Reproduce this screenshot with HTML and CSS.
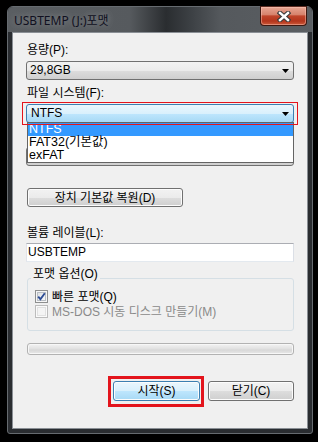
FILE: index.html
```html
<!DOCTYPE html>
<html lang="ko">
<head>
<meta charset="utf-8">
<title>USBTEMP (J:)포맷</title>
<link rel="stylesheet" href="styles.css">
</head>
<body>
<div class="window">
  <div class="titlebar">
    <span class="title">USBTEMP (J:)포맷</span>
    <div class="close-btn">
      <svg width="14" height="11" viewBox="0 0 14 11">
        <path d="M3 2 L11 9 M11 2 L3 9" stroke="#3b3b3b" stroke-width="4.6" stroke-linecap="square" fill="none"/>
        <path d="M3 2 L11 9 M11 2 L3 9" stroke="#ffffff" stroke-width="2.4" stroke-linecap="square" fill="none"/>
      </svg>
    </div>
  </div>
  <div class="frame-body">
    <div class="client">
      <span class="label">용량(P):</span>
      <div class="combo">
        <span>29,8GB</span>
        <svg class="arrow" width="7" height="4" viewBox="0 0 7 4"><path d="M0 0 H7 L3.5 4 Z" fill="#000"/></svg>
      </div>

      <span class="label gap">파일 시스템(F):</span>
      <div class="combo focused">
        <span>NTFS</span>
        <svg class="arrow" width="7" height="4" viewBox="0 0 7 4"><path d="M0 0 H7 L3.5 4 Z" fill="#000"/></svg>
        <span class="annot thin"></span>
        <ul class="dropdown">
          <li class="selected">NTFS</li>
          <li>FAT32(기본값)</li>
          <li>exFAT</li>
        </ul>
      </div>

      <span class="label gap"></span>
      <div class="combo">
        <svg class="arrow" width="7" height="4" viewBox="0 0 7 4"><path d="M0 0 H7 L3.5 4 Z" fill="#000"/></svg>
      </div>

      <button class="btn restore">장치 기본값 복원(D)</button>

      <span class="label label-volume">볼륨 레이블(L):</span>
      <div class="textbox">USBTEMP</div>

      <div class="group">
        <span class="group-label">포맷 옵션(O)</span>
        <div class="check-row first">
          <span class="cb checked">
            <svg width="9" height="9" viewBox="0 0 9 9"><path d="M1.2 4.6 L3.4 7.2 L7.8 1.2" stroke="#2d4c94" stroke-width="1.9" fill="none"/></svg>
          </span>
          <span>빠른 포맷(Q)</span>
        </div>
        <div class="check-row disabled">
          <span class="cb"></span>
          <span>MS-DOS 시동 디스크 만들기(M)</span>
        </div>
      </div>

      <div class="progress"></div>

      <div class="actions">
        <button class="btn start">시작(S)<span class="annot thick"></span></button>
        <button class="btn close">닫기(C)</button>
      </div>
    </div>
  </div>
</div>
</body>
</html>
```

FILE: styles.css
```css
* {
  box-sizing: border-box;
}

html,
body {
  margin: 0;
}

body {
  width: 318px;
  height: 442px;
  padding: 6px 0 0 7px;
  background: #000;
  font-family: "Liberation Sans", "Noto Sans CJK KR", sans-serif;
  font-size: 12px;
  color: #000;
}

.window {
  width: 306px;
  height: 428px;
  border: 1px solid #666b70;
  border-radius: 6px 6px 3px 3px;
  background: #2a2d31;
  display: flex;
  flex-direction: column;
}

.titlebar {
  height: 25px;
  flex: none;
  display: flex;
  align-items: center;
  border-radius: 5px 5px 0 0;
  background: linear-gradient(90deg, #5a5e62 0%, #565a5e 40%, #2a2d30 52%, #3c4044 60%, #55595d 70%, #5a5e62 100%);
}

.title {
  margin-left: 6px;
  font-family: "Noto Sans", "Noto Sans CJK KR", sans-serif;
  font-size: 12px;
  color: #101020;
  text-shadow: 0 0 7px rgba(255, 255, 255, 0.3), 0 0 12px rgba(255, 255, 255, 0.2);
}

.close-btn {
  margin-left: auto;
  margin-right: 5px;
  margin-top: -1px;
  align-self: flex-start;
  width: 47px;
  height: 20px;
  border: 1px solid #3e1810;
  border-top-color: #5a2a20;
  border-radius: 0 0 4px 4px;
  background: linear-gradient(#e8a693 0%, #d7836d 42%, #c0452b 50%, #b4351c 78%, #cc5a3a 100%);
  box-shadow: inset 0 0 0 1px rgba(255, 205, 190, 0.45);
  display: flex;
  align-items: center;
  justify-content: center;
}

.frame-body {
  flex: 1;
  display: flex;
  padding: 0 4px 4px;
}

.client {
  flex: 1;
  border: 1px solid #8a8f95;
  background: #f0f0f0;
  padding: 10px 13px 0;
}

.label {
  display: block;
  margin-left: 1px;
  height: 14px;
  line-height: 14px;
}

.label.gap {
  margin-top: 6px;
}

.combo {
  position: relative;
  height: 19px;
  margin-top: 4px;
  border: 1px solid #707070;
  border-radius: 3px;
  background: linear-gradient(#f2f2f2 0%, #ebebeb 50%, #dddddd 51%, #cfcfcf 100%);
  display: flex;
  align-items: center;
  padding-left: 3px;
  line-height: 15px;
}

.combo.focused {
  border-color: #3c7fb1;
  background: linear-gradient(#eaf6fd 0%, #d9f0fc 50%, #bee6fd 51%, #a7d9f5 100%);
  padding-left: 4px;
}

.arrow {
  margin-left: auto;
  margin-right: 4px;
}

.annot {
  position: absolute;
  z-index: 3;
  pointer-events: none;
}

.annot.thin {
  top: -3px;
  bottom: -3px;
  left: -5px;
  right: -5px;
  border: 1px solid #e3141c;
}

.annot.thick {
  top: -6px;
  bottom: -7px;
  left: -6px;
  right: -5px;
  border: 3px solid #e3141c;
}

.dropdown {
  position: absolute;
  z-index: 2;
  top: 100%;
  left: 0;
  right: -1px;
  margin: 0;
  padding: 0;
  list-style: none;
  background: #fff;
  border: 1px solid #646464;
}

.dropdown li {
  height: 13px;
  line-height: 13px;
  padding-left: 1px;
  font-size: 12.5px;
  white-space: nowrap;
}

.dropdown li.selected {
  background: #3399ff;
  color: #fff;
}

.btn {
  font: inherit;
  color: #000;
  padding: 0;
  border: 1px solid #707070;
  border-radius: 3px;
  background: linear-gradient(#f2f2f2 0%, #ebebeb 50%, #dddddd 51%, #cfcfcf 100%);
  box-shadow: inset 0 0 0 1px #fcfcfc;
  display: flex;
  align-items: center;
  justify-content: center;
  line-height: 14px;
}

.restore {
  margin: 22px 0 0 1px;
  width: 156px;
  height: 19px;
}

.label-volume {
  margin-top: 19px;
}

.textbox {
  margin-top: 3px;
  height: 19px;
  border: 1px solid;
  border-color: #abadb3 #dbdfe6 #e3e9ef #e2e3ea;
  background: #fff;
  padding-left: 1px;
  line-height: 17px;
}

.group {
  margin: 16px 0 0 1px;
  border: 1px solid #d5dfe5;
  border-radius: 3px;
  padding: 0 0 11px 7px;
}

.group-label {
  display: block;
  width: fit-content;
  margin: -12px 0 0 -4px;
  padding: 0 2px;
  background: #f0f0f0;
  height: 14px;
  line-height: 14px;
}

.check-row {
  display: flex;
  align-items: center;
  height: 15px;
  line-height: 14px;
}

.check-row.first {
  margin-top: 8px;
}

.check-row.disabled {
  color: #8a8a8a;
}

.cb {
  width: 13px;
  height: 13px;
  flex: none;
  margin-right: 4px;
  border: 1px solid #8e8f8f;
  background: linear-gradient(135deg, #d6d9de 0%, #f0f1f3 60%, #fbfbfb 100%);
  box-shadow: inset 0 0 0 1px #f6f6f6, inset 0 0 0 2px #b9bec4;
  display: flex;
  align-items: center;
  justify-content: center;
}

.disabled .cb {
  border-color: #bcbcbc;
  background: #f4f4f4;
  box-shadow: inset 0 0 0 1px #fafafa, inset 0 0 0 2px #e1e1e1;
}

.progress {
  height: 12px;
  margin: 12px 0 0 1px;
  border: 1px solid #b2b2b2;
  border-radius: 3px;
  background: linear-gradient(#f3f3f3 0%, #e2e2e2 45%, #d8d8d8 60%, #e9e9e9 100%);
  box-shadow: inset 0 0 0 1px #f7f7f7;
}

.actions {
  display: flex;
  justify-content: flex-end;
  gap: 8px;
  margin-top: 26px;
}

.actions .btn {
  height: 20px;
}

.start {
  position: relative;
  width: 87px;
  border-color: #3c7fb1;
  background: linear-gradient(#eaf6fd 0%, #d9f0fc 50%, #bee6fd 51%, #a7d9f5 100%);
}

.close {
  width: 86px;
}
```
